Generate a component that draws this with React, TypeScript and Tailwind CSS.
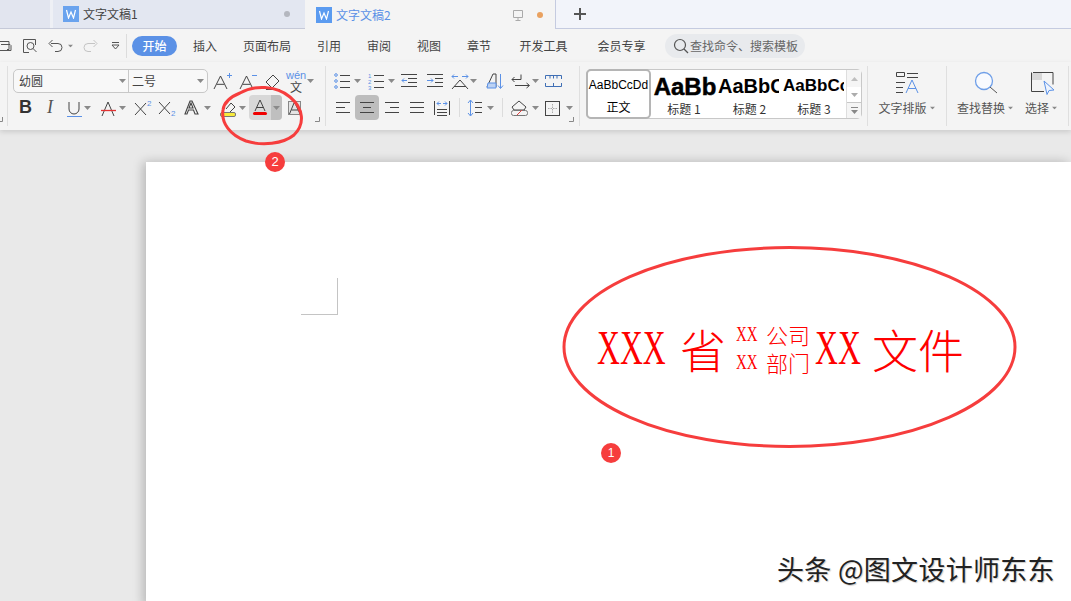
import React from "react";

const Caret = ({ className = "" }: { className?: string }) => (
  <svg width="7" height="4" viewBox="0 0 7 4" className={"shrink-0 " + className}>
    <path d="M0 0h7L3.5 4z" fill="#8a8a8a" />
  </svg>
);

const Ic = ({ w = 20, h = 20, children }: { w?: number; h?: number; children: React.ReactNode }) => (
  <svg width={w} height={h} viewBox={`0 0 ${w} ${h}`} fill="none" stroke="#444" strokeWidth="1" className="shrink-0">
    {children}
  </svg>
);

const WLogo = ({ active = false }: { active?: boolean }) => (
  <div className={active ? "w-4 h-4 bg-[#5b9bf0] flex items-center justify-center" : "w-4 h-4 bg-[#6aa3ee] flex items-center justify-center"}>
    <svg width="12" height="10" viewBox="0 0 12 10" fill="none" stroke="#fff" strokeWidth="1.2">
      <path d="M1.5 1l2 8L6 3l2.500 6 2-8" />
    </svg>
  </div>
);

const Cell = ({ className = "", children }: { className?: string; children: React.ReactNode }) => (
  <div className={"flex items-center h-full " + className}>{children}</div>
);

const Launcher = ({ className = "" }: { className?: string }) => (
  <svg width="5" height="5" viewBox="0 0 5 5" className={"absolute bottom-[4px] " + className} fill="none" stroke="#888">
    <path d="M0 4.500h4.500V0" />
  </svg>
);

const Lines = ({ x = 0, w = 14, ys = [5, 10, 15] }: { x?: number; w?: number; ys?: number[] }) => (
  <>
    {ys.map((y) => (
      <path key={y} d={`M${x} ${y + 0.5}h${w}`} />
    ))}
  </>
);

const AShape = ({ x = 0, y = 3, s = 14 }: { x?: number; y?: number; s?: number }) => (
  <path d={`M${x} ${y + s}L${x + s / 2} ${y}L${x + s} ${y + s}M${x + s * 0.22} ${y + s * 0.64}H${x + s * 0.78}`} />
);

const menu = ["插入", "页面布局", "引用", "审阅", "视图", "章节", "开发工具", "会员专享"];
const menuWidths = ["w-[50px]", "w-[74px]", "w-[50px]", "w-[50px]", "w-[50px]", "w-[50px]", "w-[79px]", "w-[77px]"];

const blue = "#5b91e6";

export default function App() {
  return (
    <div className="relative w-[1071px] h-[601px] overflow-hidden bg-[#e9e9e9] font-['Noto_Sans_CJK_SC',sans-serif] text-[12px] text-[#444]">
      {/* title bar */}
      <div className="flex h-[29px] bg-[#e3e6ef]">
        <div className="w-[50px] bg-[#e2e5ef] border-b border-[#c5c9d8]" />
        <div className="w-[3px] bg-[#eef0f5] border-b border-[#c5c9d8]" />
        <div className="w-[252px] flex items-center pl-[10px] pr-[15px] bg-[#e3e7f1] border-b border-[#c5c9d8]">
          <WLogo />
          <span className="ml-[4px]">文字文稿1</span>
          <span className="ml-auto w-[6px] h-[6px] rounded-full bg-[#b4b7bf]" />
        </div>
        <div className="w-[2px] bg-[#f4f4f4]" />
        <div className="w-[248px] flex items-center pl-[9px] pr-[12px] bg-[#f4f4f4]">
          <WLogo active />
          <span className="ml-[4px] text-[#5b91e6]">文字文稿2</span>
          <svg width="14" height="14" viewBox="0 0 14 14" fill="none" stroke="#aaa" className="ml-auto">
            <path d="M2.500 2.500h9v7h-9zM7 9.500v3M4.500 12.500h5" />
          </svg>
          <span className="ml-[12px] w-[6px] h-[6px] rounded-full bg-[#e9a15f]" />
        </div>
        <div className="flex-1 flex items-center pl-[17px] bg-[#f2f4fa] border-l border-b border-[#c5cbe0]">
          <svg width="14" height="14" viewBox="0 0 14 14" fill="none" stroke="#555" strokeWidth="2">
            <path d="M7 1v12M1 7h12" />
          </svg>
        </div>
      </div>

      {/* menu row */}
      <div className="flex items-center h-[33px] bg-[#f4f4f4]">
        <div className="flex items-center w-[127px] h-[24px] border-r border-[#dcdcdc] shrink-0">
          <svg width="12" height="16" viewBox="0 0 12 16" fill="none" stroke="#555" className="shrink-0">
            <path d="M-2 3.500h11v8H7M1 6.500h9l1 1v5H-2" />
          </svg>
          <div className="ml-[10px]">
            <svg width="16" height="16" viewBox="0 0 16 16" fill="none" stroke="#555" className="block">
              <path d="M7 14.500H1.500v-13h12V7" />
              <circle cx="8.500" cy="8" r="3.500" />
              <path d="M11 10.500l3.500 3.500" />
            </svg>
          </div>
          <svg width="16" height="16" viewBox="0 0 16 16" fill="none" stroke="#555" className="ml-[10px] shrink-0">
            <path d="M3 5.500h7a4 4 0 0 1 0 8H7M1 5.500l3.500-3.500M1 5.500L4.500 9" />
          </svg>
          <Caret className="ml-[3px] scale-75" />
          <svg width="16" height="16" viewBox="0 0 16 16" fill="none" stroke="#c4c4c4" className="ml-[8px] shrink-0">
            <path d="M13 5.500H6a4 4 0 0 0 0 8h3M15 5.500L11.500 2M15 5.500L11.500 9" />
          </svg>
          <svg width="10" height="10" viewBox="0 0 10 10" fill="none" stroke="#555" className="ml-[13px] shrink-0">
            <path d="M1 1.500h7M1 4l3.500 4L8 4z" />
          </svg>
        </div>
        <div className="ml-[5px] w-[45px] h-[20px] rounded-full bg-[#5b91e6] text-white font-medium flex items-center justify-center">开始</div>
        <div className="flex ml-[3px]">
          {menu.map((m, i) => (
            <div key={m} className={menuWidths[i] + " text-center"}>{m}</div>
          ))}
        </div>
        <div className="ml-[5px] w-[140px] h-[24px] rounded-full bg-[#e8eaed] flex items-center pl-[8px] text-[#666]">
          <svg width="16" height="16" viewBox="0 0 16 16" fill="none" stroke="#555" strokeWidth="1.2" className="shrink-0">
            <circle cx="7" cy="7" r="5.500" />
            <path d="M11 11l4 4" />
          </svg>
          <span className="ml-[1px]">查找命令、搜索模板</span>
        </div>
      </div>

      {/* ribbon */}
      <div className="relative flex h-[68px] bg-[#f4f4f4] shadow-[0_2px_5px_rgba(0,0,0,0.13)] py-[4px]">
        <div className="relative w-[8px] border-r border-[#dfdfdf]">
          <Launcher className="left-[-2px]" />
        </div>

        {/* font group */}
        <div className="relative w-[318px] pl-[5px] pt-[3px] border-r border-[#dfdfdf]">
          <div className="flex h-[24px]">
            <div className="flex w-[195px] h-[24px] border border-[#c8c8c8] rounded-[5px] bg-[#f8f8f8]">
              <div className="w-[115px] flex items-center pl-[5px] border-r border-[#c8c8c8]">
                幼圆
                <Caret className="ml-auto mr-[2px]" />
              </div>
              <div className="flex-1 flex items-center pl-[3px]">
                二号
                <Caret className="ml-auto mr-[3px]" />
              </div>
            </div>
            <Cell className="w-[27px] pl-[5px]">
              <Ic w={20} h={20}>
                <AShape x={1} y={5} s={13} />
                <path d="M14 4.500h5M16.500 2v5" stroke={blue} />
              </Ic>
            </Cell>
            <Cell className="w-[25px] pl-[4px]">
              <Ic w={20} h={20}>
                <AShape x={1} y={5} s={13} />
                <path d="M13 4.500h5" stroke={blue} />
              </Ic>
            </Cell>
            <Cell className="w-[25px] pl-[3px]">
              <Ic w={20} h={20}>
                <path d="M3 11l7-7 6 6-7 7zM3 18.500h14" />
              </Ic>
            </Cell>
            <Cell className="w-[26px] pl-[1px]">
              <div className="flex flex-col items-center">
                <span className="text-[11px] leading-[11px] font-['Liberation_Sans',sans-serif] text-[#5b91e6]">wén</span>
                <span className="text-[12px] leading-[12px] text-[#444]">文</span>
              </div>
              <Caret className="ml-[1px]" />
            </Cell>
          </div>
          <div className="flex h-[25px] mt-[2px]">
            <Cell className="w-[25px] justify-center">
              <span className="font-['Liberation_Sans',sans-serif] font-bold text-[18px] text-[#333]">B</span>
            </Cell>
            <Cell className="w-[24px] justify-center">
              <span className="font-['Liberation_Serif',serif] italic text-[18px] text-[#555]">I</span>
            </Cell>
            <Cell className="w-[33px] pl-[4px]">
              <Ic w={17} h={20}>
                <path d="M3 4v7a5 5 0 0 0 10 0V4" />
                <path d="M1 18.500h15" stroke={blue} />
              </Ic>
              <Caret className="ml-[1px]" />
            </Cell>
            <Cell className="w-[35px] pl-[5px]">
              <Ic w={17} h={20}>
                <path d="M2 18L8 4l6 14" />
                <path d="M1 12.500h15" stroke="#e33333" strokeWidth="1.3" />
              </Ic>
              <Caret className="ml-[2px]" />
            </Cell>
            <Cell className="w-[25px] pl-[4px]">
              <Ic w={20} h={20}>
                <path d="M1 5l11 12M12 5L1 17" />
                <text x="13" y="8" fontSize="8" fill={blue} stroke="none" fontFamily="Liberation Sans">2</text>
              </Ic>
            </Cell>
            <Cell className="w-[25px] pl-[3px]">
              <Ic w={20} h={20}>
                <path d="M1 4l11 12M12 4L1 16" />
                <text x="13" y="18" fontSize="8" fill={blue} stroke="none" fontFamily="Liberation Sans">2</text>
              </Ic>
            </Cell>
            <Cell className="w-[34px] pl-[4px]">
              <Ic w={15} h={20}>
                <path d="M1 16L6 3h2l6 13h-3l-1.500-4h-5L3 16zM5 10h4L7 5z" strokeWidth="1.1" />
              </Ic>
              <Caret className="ml-[5px]" />
            </Cell>
            <Cell className="w-[35px] pl-[6px]">
              <Ic w={16} h={20}>
                <path d="M6 11l5-6 4 4-5 5" />
                <rect x="0.500" y="14.500" width="15" height="4" rx="1.500" fill="#f7ea3c" stroke="#777" />
              </Ic>
              <Caret className="ml-[3px]" />
            </Cell>
            <div className="flex w-[33px] h-[25px] rounded-[4px] overflow-hidden bg-[#d8d8d8]">
              <div className="w-[22px] flex flex-col items-center pt-[4px]">
                <Ic w={12} h={12}>
                  <path d="M1 12L6 1l5 11M2.500 8.500h7" />
                </Ic>
                <div className="w-[14px] h-[3px] bg-[#f00000] rounded-full mt-[1px]" />
              </div>
              <div className="flex-1 bg-[#bfbfbf] flex items-center justify-center">
                <Caret />
              </div>
            </div>
            <Cell className="w-[25px] pl-[5px]">
              <Ic w={15} h={16}>
                <rect x="1.500" y="1.500" width="12" height="13" fill="#e4e4e4" stroke="#888" />
                <path d="M2.500 14L7 3h1l5 11M4.500 10h6.500" />
              </Ic>
            </Cell>
          </div>
          <Launcher className="right-[5px]" />
        </div>

        {/* paragraph group */}
        <div className="relative w-[254px] pl-[4px] pt-[3px] border-r border-[#dfdfdf]">
          <div className="flex h-[24px]">
            <Cell className="w-[35px] pl-[4px]">
              <Ic w={18} h={18}>
                <circle cx="2" cy="3" r="1.300" stroke={blue} />
                <circle cx="2" cy="9" r="1.300" stroke={blue} />
                <circle cx="2" cy="15" r="1.300" stroke={blue} />
                <Lines x={6} w={10} ys={[3, 9, 15]} />
              </Ic>
              <Caret className="ml-[2px]" />
            </Cell>
            <Cell className="w-[32px] pl-[3px]">
              <Ic w={18} h={18}>
                <text x="0" y="6" fontSize="6" fill={blue} stroke="none" fontFamily="Liberation Sans">1</text>
                <text x="0" y="12" fontSize="6" fill={blue} stroke="none" fontFamily="Liberation Sans">2</text>
                <text x="0" y="18" fontSize="6" fill={blue} stroke="none" fontFamily="Liberation Sans">3</text>
                <Lines x={6} w={10} ys={[3, 9, 15]} />
              </Ic>
              <Caret className="ml-[2px]" />
            </Cell>
            <Cell className="w-[26px] pl-[4px]">
              <Ic w={17} h={18}>
                <Lines x={0} w={16} ys={[2, 14]} />
                <Lines x={7} w={9} ys={[6, 10]} />
                <path d="M6 8.500H1M3 6.500l-2 2 2 2" stroke={blue} />
              </Ic>
            </Cell>
            <Cell className="w-[25px] pl-[4px]">
              <Ic w={17} h={18}>
                <Lines x={0} w={16} ys={[2, 14]} />
                <Lines x={8} w={8} ys={[6, 10]} />
                <path d="M0 8.500h6M4 6.500l2 2-2 2" stroke={blue} />
              </Ic>
            </Cell>
            <Cell className="w-[32px] pl-[3px]">
              <Ic w={18} h={18}>
                <path d="M1 17L9 8l8 9M3 14.500h12" />
                <path d="M1 4.500h6M3 2.500l-2 2 2 2M11 4.500h6M15 2.500l2 2-2 2" stroke={blue} />
              </Ic>
              <Caret className="ml-[1px]" />
            </Cell>
            <Cell className="w-[27px] pl-[6px]">
              <Ic w={18} h={20}>
                <path d="M1 16L7 3h3v13" />
                <path d="M2 12h8v5H1z" fill="#bcd2f3" stroke={blue} />
                <path d="M14.500 3v14M12 14.500l2.500 3 2.500-3" stroke={blue} />
              </Ic>
            </Cell>
            <Cell className="w-[33px] pl-[4px]">
              <Ic w={20} h={18}>
                <path d="M10 2.500v5H1M3.500 5L1 7.500 3.500 10M4 13.500h14M15.500 11l3 2.500-3 2.500" />
              </Ic>
              <Caret className="ml-[1px]" />
            </Cell>
            <Cell className="w-[26px] pl-[5px]">
              <Ic w={17} h={14}>
                <path d="M0.500 5V1.500h16V5M0.500 9v3.500h16V9M5 1.500v3M8.500 1.500v3M12 1.500v3M8.500 9v3.500M4 12.500h1M12 12.500h1" stroke="#3f6fb5" />
              </Ic>
            </Cell>
          </div>
          <div className="flex h-[25px] mt-[2px]">
            <Cell className="w-[25px] pl-[5px]">
              <Ic w={16} h={16}>
                <Lines x={1} w={14} ys={[2, 12]} />
                <Lines x={1} w={9} ys={[7]} />
              </Ic>
            </Cell>
            <div className="w-[24px] h-[25px] rounded-[4px] bg-[#bdbdbd] flex items-center justify-center">
              <Ic w={16} h={16}>
                <Lines x={1} w={14} ys={[2, 12]} />
                <Lines x={4} w={8} ys={[7]} />
              </Ic>
            </div>
            <Cell className="w-[26px] pl-[5px]">
              <Ic w={16} h={16}>
                <Lines x={1} w={14} ys={[2, 12]} />
                <Lines x={6} w={9} ys={[7]} />
              </Ic>
            </Cell>
            <Cell className="w-[25px] pl-[4px]">
              <Ic w={16} h={16}>
                <Lines x={1} w={14} ys={[2, 7, 12]} />
              </Ic>
            </Cell>
            <Cell className="w-[29px] pl-[3px]">
              <Ic w={18} h={18}>
                <path d="M1.500 2v14M16.500 2v14M4 10.500h10M4 13.500h10M4 16.500h10" />
                <path d="M4 4.500h4M6 2.500l-2 2 2 2M10 4.500h4M12 2.500l2 2-2 2" stroke={blue} />
              </Ic>
            </Cell>
            <div className="w-px h-[19px] self-center bg-[#dcdcdc]" />
            <Cell className="w-[42px] pl-[7px]">
              <Ic w={15} h={18}>
                <path d="M3.500 1.500v15M1 4l2.500-3L6 4M1 14l2.500 3L6 14" stroke={blue} />
                <Lines x={8} w={7} ys={[3, 8, 13]} />
              </Ic>
              <Caret className="ml-[5px]" />
            </Cell>
            <div className="w-px h-[19px] self-center bg-[#dcdcdc]" />
            <Cell className="w-[39px] pl-[8px]">
              <Ic w={17} h={18}>
                <path d="M1 8l7-6 7 6-2 3H3z" />
                <rect x="0.500" y="11.500" width="16" height="5" rx="2" stroke="#777" />
                <path d="M6 16l5-5" stroke="#e04040" />
              </Ic>
              <Caret className="ml-[4px]" />
            </Cell>
            <Cell className="w-[33px] pl-[2px]">
              <Ic w={16} h={16}>
                <rect x="1.500" y="1.500" width="14" height="14" />
                <path d="M8.500 4v9M4 8.500h9" stroke="#aaa" strokeDasharray="1.500 1" />
              </Ic>
              <Caret className="ml-[6px]" />
            </Cell>
          </div>
          <Launcher className="right-[5px]" />
        </div>

        {/* styles gallery */}
        <div className="w-[288px] pl-[6px] pt-[3px] border-r border-[#dfdfdf]">
          <div className="flex w-[276px] h-[50px] border border-[#c8c8c8] rounded-[5px] bg-white">
            <div className="w-[65px] shrink-0 ml-[-1px] mt-[-1px] h-[50px] border-2 border-[#b5b5b5] rounded-[5px] flex flex-col items-center text-black pt-[6px]">
              <span className="text-[12px] leading-[16px] font-['Liberation_Sans',sans-serif] whitespace-nowrap">AaBbCcDd</span>
              <span className="text-[12px] leading-[16px] mt-[6px]">正文</span>
            </div>
            <div className="w-[66px] shrink-0 flex flex-col items-center overflow-hidden text-[#333]">
              <span className="h-[29px] pl-[2px] text-[24px] leading-[33px] font-bold font-['Liberation_Sans',sans-serif] text-black whitespace-nowrap [-webkit-text-stroke:0.5px_black]">AaBb</span>
              <span className="text-[12px] leading-[16px] mt-[2px]">标题 1</span>
            </div>
            <div className="w-[65px] shrink-0 flex flex-col items-center overflow-hidden text-[#333]">
              <span className="self-start h-[29px] w-[62px] overflow-hidden pl-[1px] text-[20px] leading-[32px] font-bold font-['Liberation_Sans',sans-serif] text-black whitespace-nowrap">AaBbC</span>
              <span className="text-[12px] leading-[16px] mt-[2px]">标题 2</span>
            </div>
            <div className="w-[64px] shrink-0 flex flex-col items-center overflow-hidden text-[#333]">
              <span className="self-start h-[29px] w-[62px] overflow-hidden pl-[1px] text-[17px] leading-[31px] font-bold font-['Liberation_Sans',sans-serif] text-black whitespace-nowrap">AaBbCc</span>
              <span className="text-[12px] leading-[16px] mt-[2px]">标题 3</span>
            </div>
            <div className="flex-1 border-l border-[#dedede] flex flex-col">
              <div className="h-[17px] bg-[#f5f5f5] flex items-center justify-center">
                <Caret className="rotate-180 opacity-50" />
              </div>
              <div className="h-[16px] flex items-center justify-center border-b border-[#c8c8c8]">
                <Caret className="opacity-70" />
              </div>
              <div className="flex-1 bg-[#f5f5f5] flex items-center justify-center">
                <svg width="7" height="7" viewBox="0 0 7 7" className="shrink-0">
                  <path d="M0 .5h7" stroke="#888" />
                  <path d="M0 3h7L3.500 7z" fill="#888" />
                </svg>
              </div>
            </div>
          </div>
        </div>

        {/* layout */}
        <div className="w-[79px] flex flex-col items-center border-r border-[#dfdfdf] pt-[5px]">
          <Ic w={24} h={24}>
            <path d="M1.500 1.500h8v4h-8zM12 2.500h11M12 6.500h11M1 11.500h9M1 16.500h7M1 21.500h7" />
            <path d="M11 22l6-13 6 13M13 17.500h8" stroke={blue} />
          </Ic>
          <div className="flex items-center mt-[4px] text-[#555]">
            文字排版
            <Caret className="ml-[2px] scale-75" />
          </div>
        </div>

        {/* find */}
        <div className="w-[122px] flex border-r border-[#dfdfdf] pl-[5px] pt-[5px]">
          <div className="w-[67px] flex flex-col items-center">
            <svg width="24" height="24" viewBox="0 0 24 24" fill="none" className="shrink-0">
              <circle cx="10" cy="10" r="8.500" stroke="#6f9fe8" fill="#f8fafe" strokeWidth="1.300" />
              <path d="M16 16l7 6" stroke="#555" />
            </svg>
            <div className="flex items-center mt-[4px] text-[#555] whitespace-nowrap">
              查找替换
              <Caret className="ml-[2px] scale-75" />
            </div>
          </div>
          <div className="ml-[6px] flex flex-col items-center">
            <svg width="24" height="24" viewBox="0 0 24 24" fill="none" stroke="#444" className="shrink-0">
              <path d="M3 1.500h20v12M14 20.500H1.500v-19" />
              <rect x="2" y="2" width="10" height="7" fill="#d8d8d8" stroke="none" />
              <path d="M14 10l10 9-5 .5-2 4z" stroke={blue} fill="#eef4fd" />
            </svg>
            <div className="flex items-center mt-[4px] text-[#555] whitespace-nowrap">
              选择
              <Caret className="ml-[2px] scale-75" />
            </div>
          </div>
        </div>
      </div>

      {/* document */}
      <div className="ml-[146px] mt-[32px] h-[445px] bg-white shadow-[-3px_0_10px_rgba(0,0,0,0.22)] pl-[155px] pt-[116px] text-[#ff0000]">
        <div className="w-[37px] h-[37px] border-r border-b border-[#c4c4c4]" />
        <div className="flex items-center ml-[296px] mt-[5px] h-[56px] whitespace-nowrap leading-none font-light text-[46px]">
          <span className="inline-block w-[69px] origin-left scale-x-[.66] font-['Liberation_Serif',serif] text-[48px]">XXX</span>
          <span className="ml-[14px] w-[46px]">省</span>
          <div className="ml-[10px] w-[79px] flex flex-col text-[22px]">
            <div className="flex items-center h-[28px]">
              <span className="inline-block w-[30px] origin-left scale-x-[.68] font-['Liberation_Serif',serif]">XX</span>
              <span>公司</span>
            </div>
            <div className="flex items-center h-[28px]">
              <span className="inline-block w-[30px] origin-left scale-x-[.68] font-['Liberation_Serif',serif]">XX</span>
              <span>部门</span>
            </div>
          </div>
          <span className="inline-block w-[57px] origin-left scale-x-[.66] font-['Liberation_Serif',serif] text-[48px]">XX</span>
          <span>文件</span>
        </div>
      </div>

      {/* annotations on top of the screenshot */}
      <svg width="1071" height="601" className="absolute inset-0 pointer-events-none" fill="none" stroke="#f63d3d" strokeWidth="3">
        <ellipse cx="789.500" cy="347" rx="225.500" ry="99.500" />
        <path d="M240 93c14-8 36-8 50 4 14 12 15 27 4 38-11 9-32 11-48 6-16-6-25-18-23-31 1-8 7-13 17-17z" />
      </svg>
      <div className="absolute left-[601px] top-[443px] w-[20px] h-[20px] rounded-full bg-[#f63d3d] text-white text-[12px] flex items-center justify-center font-['Liberation_Sans',sans-serif]">1</div>
      <div className="absolute left-[265px] top-[152px] w-[20px] h-[20px] rounded-full bg-[#f63d3d] text-white text-[13px] flex items-center justify-center font-['Liberation_Sans',sans-serif]">2</div>
      <div className="absolute left-[777px] top-[549px] text-[27px] leading-[40px] tracking-[0.3px] text-[#222] [text-shadow:1px_1px_1px_#ccc] whitespace-nowrap">头条 @图文设计师东东</div>
    </div>
  );
}
